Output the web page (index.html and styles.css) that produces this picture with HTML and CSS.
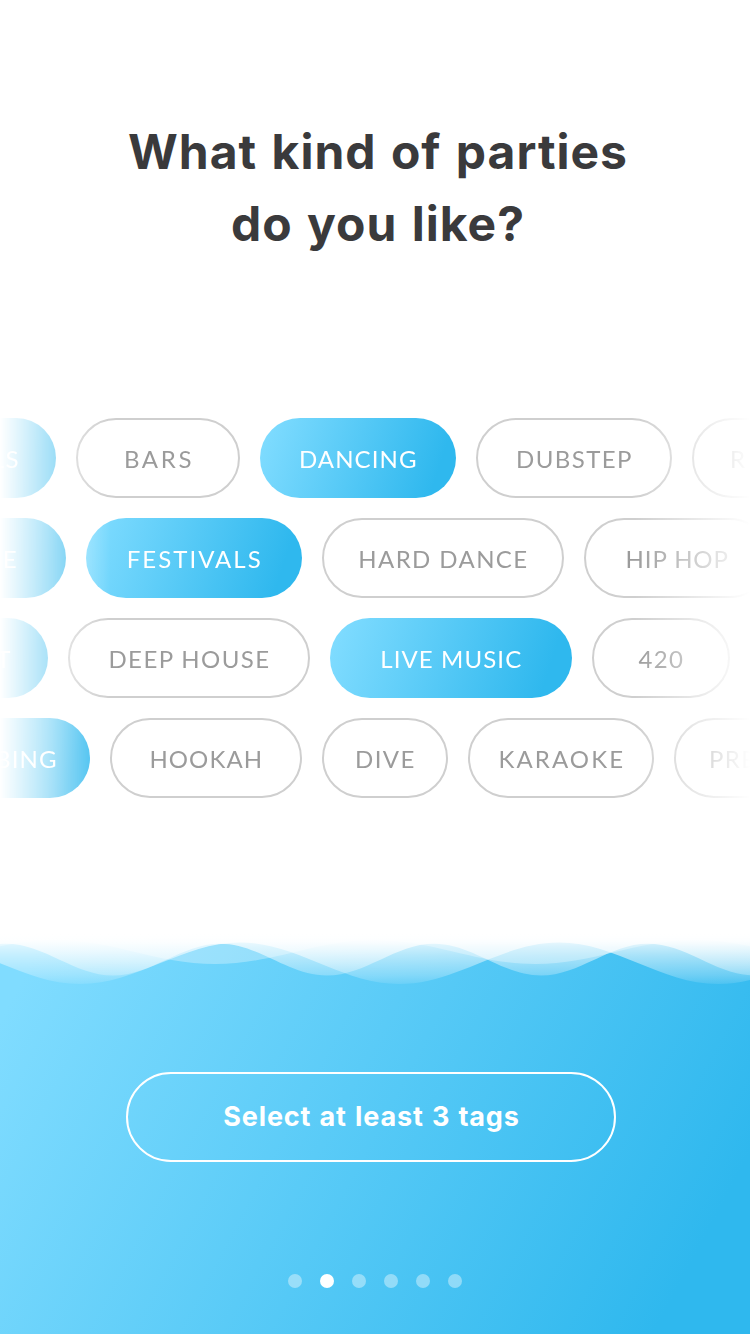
FILE: index.html
```
<!DOCTYPE html>
<html lang="en">
<head>
<meta charset="utf-8">
<title>Party tags</title>
<link rel="stylesheet" href="styles.css">
</head>
<body>
<main class="screen">
  <h1 class="title">What kind of parties<br>do you like?</h1>

  <section class="tags">
    <div class="row row-1">
      <div class="tag lead on track-m"><span>LS</span></div>
      <div class="tag w-164 track-3xl"><span>BARS</span></div>
      <div class="tag w-196 on track-s"><span>DANCING</span></div>
      <div class="tag w-196 track-m"><span>DUBSTEP</span></div>
      <div class="tag tail track-m"><span>R</span></div>
    </div>
    <div class="row row-2">
      <div class="tag lead on track-m"><span>E</span></div>
      <div class="tag w-216 on track-xl"><span>FESTIVALS</span></div>
      <div class="tag w-242 track-m"><span>HARD DANCE</span></div>
      <div class="tag w-186 track-xs"><span>HIP HOP</span></div>
    </div>
    <div class="row row-3">
      <div class="tag lead on track-m"><span>T</span></div>
      <div class="tag w-242 track-m"><span>DEEP HOUSE</span></div>
      <div class="tag w-242 on track-s"><span>LIVE MUSIC</span></div>
      <div class="tag w-138 track-m"><span>420</span></div>
    </div>
    <div class="row row-4">
      <div class="tag lead on track-s"><span>BING</span></div>
      <div class="tag w-192 track-s"><span>HOOKAH</span></div>
      <div class="tag w-126 track-m"><span>DIVE</span></div>
      <div class="tag w-186 track-2xl"><span>KARAOKE</span></div>
      <div class="tag tail track-m"><span>PRE</span></div>
    </div>
  </section>

  <section class="sea">
    <svg class="waves" viewBox="0 0 750 60" width="750" height="60" aria-hidden="true">
      <defs>
        <linearGradient id="foam" gradientUnits="userSpaceOnUse" x1="0" y1="0" x2="0" y2="60">
          <stop offset="0" stop-color="#fff"/>
          <stop offset=".06" stop-color="#fff" stop-opacity=".98"/>
          <stop offset=".17" stop-color="#fff" stop-opacity=".86"/>
          <stop offset=".27" stop-color="#fff" stop-opacity=".7"/>
          <stop offset=".42" stop-color="#fff" stop-opacity=".54"/>
          <stop offset=".58" stop-color="#fff" stop-opacity=".4"/>
          <stop offset=".75" stop-color="#fff" stop-opacity=".26"/>
          <stop offset=".9" stop-color="#fff" stop-opacity=".1"/>
        </linearGradient>
      </defs>
      <path fill="#fff" fill-opacity=".3" d="M-105 0V34C-46 34 -4 10 55 10S156 34 215 34S316 10 375 10S476 34 535 34S636 10 695 10S796 34 855 34V0Z"/>
      <path transform="translate(-2 0)" fill="url(#foam)" d="M-99 0V45.5C-60 45.5 -31 13.7 8 13.7S76 45.5 115 45.5S183 13.7 222 13.7S290 45.5 329 45.5S397 13.7 436 13.7S504 45.5 543 45.5S611 13.7 650 13.7S718 45.5 757 45.5V0Z"/>
      <path fill="url(#foam)" d="M-80 0V12.5C-22 12.5 22 54 80 54S182 12.5 240 12.5S341 54 399 54S501 12.5 559 12.5S660 54 718 54S820 12.5 878 12.5V0Z"/>
    </svg>
    <div class="cta">Select at least 3 tags</div>
    <div class="dots"><i></i><i class="current"></i><i></i><i></i><i></i><i></i></div>
  </section>
</main>
</body>
</html>
```
FILE: styles.css
```
* { box-sizing: border-box; }

body {
  margin: 0;
  background: #fff;
}

.screen {
  display: flex;
  flex-direction: column;
  width: 750px;
  height: 1334px;
  overflow: hidden;
}

.title {
  height: 302px;
  margin: 116px 0 0 6px;
  color: #3a3a3c;
  font: 700 48px/72px Inter, sans-serif;
  letter-spacing: 1px;
  word-spacing: 2px;
  text-align: center;
}

.tags {
  display: flex;
  flex-direction: column;
  gap: 20px;
  height: 380px;
  -webkit-mask-image: linear-gradient(90deg, transparent 0, rgba(0, 0, 0, 0.44) 52px, #000 110px, #000 635px, transparent 750px);
  mask-image: linear-gradient(90deg, transparent 0, rgba(0, 0, 0, 0.44) 52px, #000 110px, #000 635px, transparent 750px);
}

.row {
  display: flex;
  gap: 20px;
}

.row-1 { margin-left: -144px; }
.row-2 { margin-left: -134px; }
.row-3 { margin-left: -152px; }
.row-4 { margin-left: -110px; }

.tag {
  display: flex;
  flex: none;
  align-items: center;
  justify-content: center;
  height: 80px;
  padding-top: 2px;
  border: 2px solid #cfcfcf;
  border-radius: 40px;
  color: #9b9b9b;
  font: 400 24px/30px Lato, sans-serif;
  letter-spacing: var(--track);
  white-space: nowrap;
}

.tag span { margin-right: calc(0.5px - var(--track)); }

.on {
  border: 0;
  background: linear-gradient(108deg, #80dcff 3%, #2fb8ee 88%);
  color: #fff;
}

.lead {
  justify-content: flex-end;
  width: 200px;
  padding-right: 37px;
}

.row-2 .lead { padding-right: 49px; }
.row-4 .lead { padding-right: 33px; }

.tail {
  justify-content: flex-start;
  width: 200px;
  padding-left: 36px;
}

.row-4 .tail { padding-left: 33px; }

.w-126 { width: 126px; }
.w-138 { width: 138px; }
.w-164 { width: 164px; }
.w-186 { width: 186px; }
.w-192 { width: 192px; }
.w-196 { width: 196px; }
.w-216 { width: 216px; }
.w-242 { width: 242px; }

.track-xs { --track: 0.9px; }
.track-s { --track: 1.1px; }
.track-m { --track: 1.4px; }
.track-xl { --track: 2px; }
.track-2xl { --track: 2.1px; }
.track-3xl { --track: 2.7px; }

.sea {
  display: flex;
  flex-direction: column;
  align-items: center;
  height: 404px;
  margin-top: 132px;
  background: linear-gradient(118deg, #80dcff 5%, #2fb8ee 90%);
}

.waves { display: block; }

.cta {
  width: 490px;
  height: 90px;
  margin: 82px 8px 0 0;
  border: 2px solid #fff;
  border-radius: 45px;
  color: #fff;
  font: 700 27px/86px Inter, sans-serif;
  letter-spacing: 0.85px;
  word-spacing: 1px;
  text-align: center;
  text-indent: 1px;
}

.dots {
  display: flex;
  gap: 18px;
  margin-top: 112px;
}

.dots i {
  width: 14px;
  height: 14px;
  border-radius: 50%;
  background: rgba(255, 255, 255, 0.4);
}

.dots .current { background: #fff; }
```
